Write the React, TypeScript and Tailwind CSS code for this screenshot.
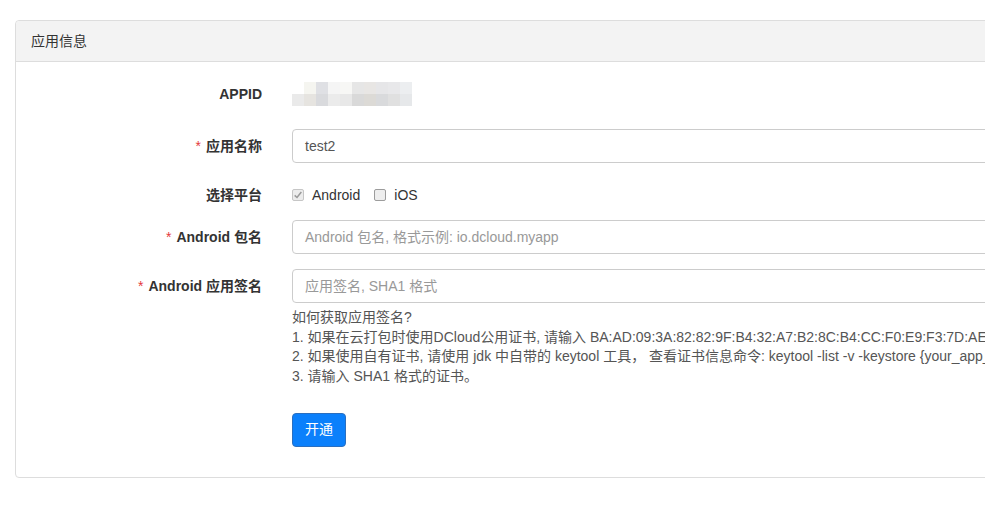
const font = "font-['Liberation_Sans','Noto_Sans_CJK_SC',sans-serif]";

const blurTop = ["#f5f5f0", "#dfe0e4", "#f5f5f5", "#f7f7f5", "#e6e6e6", "#e8e6e4", "#e6e6e8", "#e8e8ea", "#eceef0"];
const blurBottom = ["#eaeaea", "#e6e4e0", "#d9dadd", "#ebebeb", "#e8e8e8", "#d9d9d9", "#dcdad6", "#d9dadc", "#e0e0e0", "#e6e8ea"];

const Label = ({ text, required }: { text: string; required?: boolean }) => (
    <div className="w-[246px] shrink-0 text-right font-bold text-[14px] text-[#333]">
        {required && <span className="text-[#e4393c] font-normal mr-[5px]">*</span>}
        {text}
    </div>
);

const Input = ({ value, placeholder }: { value?: string; placeholder?: string }) => (
    <div className="flex-1 h-[34px] border border-[#ccc] rounded-[4px] px-[12px] flex items-center text-[14px] bg-white">
        {value ? <span className="text-[#555]">{value}</span> : <span className="text-[#999]">{placeholder}</span>}
    </div>
);

export default function App() {
    return (
        <div className={`w-[985px] h-[512px] overflow-hidden bg-white ${font}`}>
            <div className="pt-[20px] pl-[15px]">
                <div className="w-[1200px] border border-[#ddd] rounded-[4px]">
                    <div className="h-[41px] bg-[#f3f3f3] border-b border-[#ddd] px-[15px] flex items-center text-[14px] text-[#333] rounded-t-[4px]">
                        应用信息
                    </div>
                    <div className="pt-[15px] pb-[30px]">
                        {/* APPID */}
                        <div className="flex items-center h-[34px]">
                            <Label text="APPID" />
                            <div className="pl-[30px] flex flex-col">
                                <div className="flex h-[12px] pl-[12px]">
                                    {blurTop.map((c, i) => (
                                        <div key={i} className="w-[12px] h-[12px]" style={{ backgroundColor: c }} />
                                    ))}
                                </div>
                                <div className="flex h-[12px]">
                                    {blurBottom.map((c, i) => (
                                        <div key={i} className="w-[12px] h-[12px]" style={{ backgroundColor: c }} />
                                    ))}
                                </div>
                            </div>
                        </div>
                        <div className="flex items-center mt-[18px]">
                            <Label text="应用名称" required />
                            <div className="pl-[30px] flex-1 flex">
                                <Input value="test2" />
                            </div>
                        </div>
                        <div className="flex items-center h-[34px] mt-[15px]">
                            <Label text="选择平台" />
                            <div className="pl-[30px] flex items-center text-[14px] text-[#333]">
                                <span className="w-[12px] h-[12px] border border-[#c6c6c6] bg-[#ececec] rounded-[2px] flex items-center justify-center">
                                    <svg viewBox="0 0 12 12" className="w-[10px] h-[10px]">
                                        <path d="M2 6.5 L4.8 9 L10 2.5" fill="none" stroke="#9a9a9a" strokeWidth="1.8" />
                                    </svg>
                                </span>
                                <span className="ml-[8px]">Android</span>
                                <span className="ml-[14px] w-[12px] h-[12px] border border-[#9c9c9c] bg-[#eeeeee] rounded-[2px]" />
                                <span className="ml-[8px]">iOS</span>
                            </div>
                        </div>
                        <div className="flex items-center mt-[8px]">
                            <Label text="Android 包名" required />
                            <div className="pl-[30px] flex-1 flex">
                                <Input placeholder="Android 包名, 格式示例: io.dcloud.myapp" />
                            </div>
                        </div>
                        <div className="flex items-center mt-[15px]">
                            <Label text="Android 应用签名" required />
                            <div className="pl-[30px] flex-1 flex">
                                <Input placeholder="应用签名, SHA1 格式" />
                            </div>
                        </div>
                        <div className="flex">
                            <div className="w-[246px] shrink-0" />
                            <div className="pl-[30px] mt-[5px] text-[14px] leading-[19.5px] text-[#555] whitespace-nowrap">
                                <div>如何获取应用签名?</div>
                                <div>1. 如果在云打包时使用DCloud公用证书, 请输入 BA:AD:09:3A:82:82:9F:B4:32:A7:B2:8C:B4:CC:F0:E9:F3:7D:AE:E0</div>
                                <div>2. 如果使用自有证书, 请使用 jdk 中自带的 keytool 工具， 查看证书信息命令: keytool -list -v -keystore {"{your_app_keystore}"}</div>
                                <div>3. 请输入 SHA1 格式的证书。</div>
                                <button className="mt-[27px] h-[34px] px-[12px] bg-[#0b80fb] border border-[#2a6fc0] rounded-[4px] text-white text-[14px]">
                                    开通
                                </button>
                            </div>
                        </div>
                    </div>
                </div>
            </div>
        </div>
    );
}
